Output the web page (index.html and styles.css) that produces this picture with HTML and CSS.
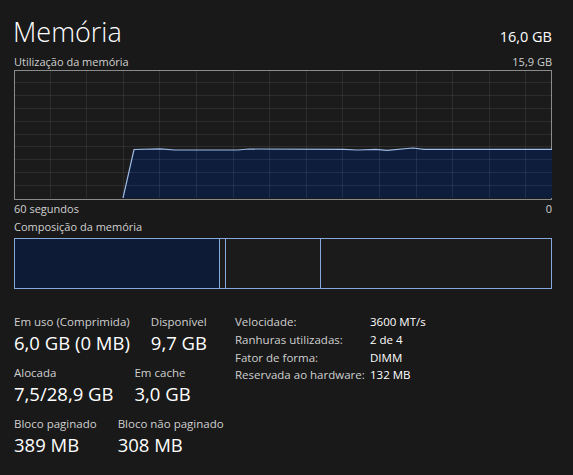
FILE: index.html
```html
<!DOCTYPE html>
<html lang="pt-BR">
<head>
  <meta charset="UTF-8">
  <meta name="viewport" content="width=device-width, initial-scale=1.0">
  <title>Memória</title>
  <link rel="stylesheet" href="styles.css">
</head>
<body>
  <div class="page">
    <div class="header">
      <h1>Memória</h1>
      <span class="total">16,0 GB</span>
    </div>

    <div class="caption">
      <span>Utilização da memória</span>
      <span>15,9 GB</span>
    </div>
    <div class="chart">
      <svg width="538" height="128" viewBox="0 0 538 128">
        <polygon class="area" points="109,128 120,79.5 146,78.8 161,80 223.6,80 234.5,79 329.6,79.4 344,80 362,79.4 373,80.3 399,78 410,79.4 538,79.4 538,128"/>
        <g class="grid">
          <line x1="36.5" y1="0" x2="36.5" y2="128"/>
          <line x1="72.5" y1="0" x2="72.5" y2="128"/>
          <line x1="109.5" y1="0" x2="109.5" y2="128"/>
          <line x1="145.5" y1="0" x2="145.5" y2="128"/>
          <line x1="182.5" y1="0" x2="182.5" y2="128"/>
          <line x1="219.5" y1="0" x2="219.5" y2="128"/>
          <line x1="255.5" y1="0" x2="255.5" y2="128"/>
          <line x1="292.5" y1="0" x2="292.5" y2="128"/>
          <line x1="328.5" y1="0" x2="328.5" y2="128"/>
          <line x1="365.5" y1="0" x2="365.5" y2="128"/>
          <line x1="402.5" y1="0" x2="402.5" y2="128"/>
          <line x1="438.5" y1="0" x2="438.5" y2="128"/>
          <line x1="475.5" y1="0" x2="475.5" y2="128"/>
          <line x1="511.5" y1="0" x2="511.5" y2="128"/>
          <line x1="0" y1="12.5" x2="538" y2="12.5"/>
          <line x1="0" y1="25.5" x2="538" y2="25.5"/>
          <line x1="0" y1="38.5" x2="538" y2="38.5"/>
          <line x1="0" y1="51.5" x2="538" y2="51.5"/>
          <line x1="0" y1="64.5" x2="538" y2="64.5"/>
          <line x1="0" y1="76.5" x2="538" y2="76.5"/>
          <line x1="0" y1="89.5" x2="538" y2="89.5"/>
          <line x1="0" y1="102.5" x2="538" y2="102.5"/>
          <line x1="0" y1="115.5" x2="538" y2="115.5"/>
        </g>
        <polyline class="line" points="109,128 120,79.5 146,78.8 161,80 223.6,80 234.5,79 329.6,79.4 344,80 362,79.4 373,80.3 399,78 410,79.4 538,79.4"/>
      </svg>
    </div>
    <div class="axis">
      <span>60 segundos</span>
      <span>0</span>
    </div>

    <div class="caption composition-title">Composição da memória</div>
    <div class="composition">
      <div class="seg in-use" style="width: 205px"></div>
      <div class="seg" style="width: 6px"></div>
      <div class="seg" style="width: 95px"></div>
      <div class="seg free"></div>
    </div>

    <div class="stats">
      <div class="left">
        <div class="row">
          <div class="stat">
            <div class="label">Em uso (Comprimida)</div>
            <div class="value">6,0 GB (0 MB)</div>
          </div>
          <div class="stat">
            <div class="label">Disponível</div>
            <div class="value">9,7 GB</div>
          </div>
        </div>
        <div class="row">
          <div class="stat">
            <div class="label">Alocada</div>
            <div class="value">7,5/28,9 GB</div>
          </div>
          <div class="stat">
            <div class="label">Em cache</div>
            <div class="value">3,0 GB</div>
          </div>
        </div>
        <div class="row">
          <div class="stat">
            <div class="label">Bloco paginado</div>
            <div class="value">389 MB</div>
          </div>
          <div class="stat">
            <div class="label">Bloco não paginado</div>
            <div class="value">308 MB</div>
          </div>
        </div>
      </div>

      <div class="details">
        <span>Velocidade:</span><span class="val">3600 MT/s</span>
        <span>Ranhuras utilizadas:</span><span class="val">2 de 4</span>
        <span>Fator de forma:</span><span class="val">DIMM</span>
        <span>Reservada ao hardware:</span><span class="val">132 MB</span>
      </div>
    </div>
  </div>
</body>
</html>
```

FILE: styles.css
```css
body {
  margin: 0;
  background-color: #191919;
  color: #d4d4d4;
  font-family: "Open Sans", "Noto Sans", sans-serif;
}
.page {
  width: 538px;
  padding: 12px 21px 0 14px;
}
.header {
  display: flex;
  justify-content: space-between;
  align-items: baseline;
  height: 42px;
}
h1 {
  margin: 0 0 0 -1px;
  font-size: 27px;
  font-weight: 300;
  color: #fff;
  line-height: 40px;
}
.total {
  font-size: 14.5px;
  color: #fff;
}
.caption {
  display: flex;
  justify-content: space-between;
  font-size: 11px;
  line-height: 16px;
  color: #d0d0d0;
}
.chart {
  width: 536px;
  height: 128px;
  border: 1px solid #8a8a8a;
  background: #1b1b1b;
}
.chart svg {
  display: block;
  margin: -1px 0 0 -1px;
}
.grid line {
  stroke: rgba(255, 255, 255, 0.08);
  stroke-width: 1;
}
.area {
  fill: #0d1d3b;
}
.line {
  fill: none;
  stroke: #9dbbe6;
  stroke-width: 1.2;
}
.axis {
  display: flex;
  justify-content: space-between;
  font-size: 11px;
  line-height: 18px;
  color: #d0d0d0;
}
.composition-title {
  line-height: 17px;
}
.composition {
  display: flex;
  height: 49px;
  margin-top: 3px;
  border: 1px solid #86a8dc;
  background: #1b1b1b;
}
.seg {
  border-right: 1px solid #86a8dc;
  box-sizing: border-box;
}
.seg.in-use {
  background: #0e1b36;
}
.seg.free {
  flex: 1;
  border-right: none;
}
.stats {
  display: grid;
  grid-template-columns: 221px 1fr;
  align-items: start;
  margin-top: 24px;
}
.row {
  display: flex;
  gap: 21px;
  margin-bottom: 8px;
}
.label {
  font-size: 11.5px;
  line-height: 17px;
  color: #d0d0d0;
}
.value {
  font-size: 18.5px;
  line-height: 26px;
  color: #fff;
}
.details {
  display: grid;
  grid-template-columns: 135px auto;
  font-size: 11.5px;
  line-height: 17.8px;
  color: #d0d0d0;
}
.details .val {
  color: #fff;
}
```
